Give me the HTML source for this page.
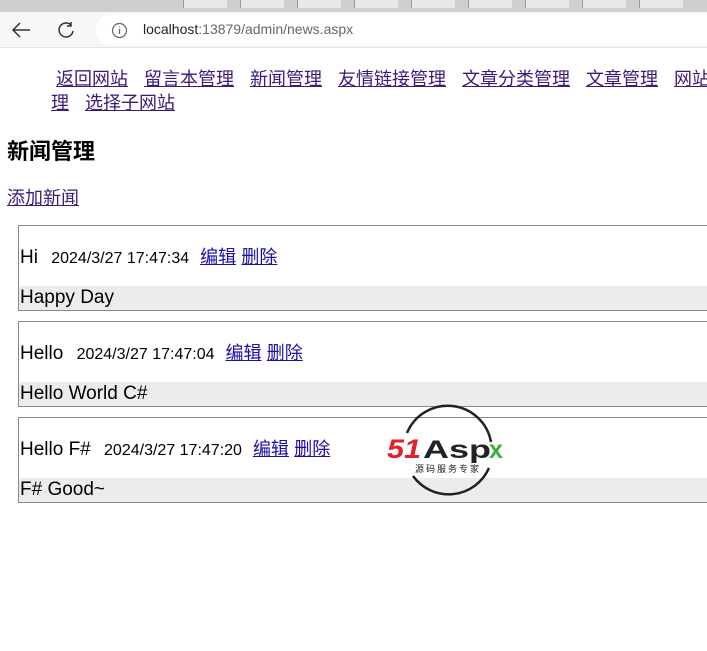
<!DOCTYPE html>
<html><head><meta charset="utf-8"><style>
*{margin:0;padding:0;box-sizing:border-box}
body{width:707px;height:651px;overflow:hidden;background:#fff;font-family:"Liberation Sans","Noto Sans CJK SC",sans-serif;position:relative}
.tabs{position:absolute;left:0;top:0;width:707px;height:12px;background:#cfcfcf}
.tab{position:absolute;top:0;height:8px;width:44px;background:#e8e8e8;border-left:1px solid #999}
.bar{position:absolute;left:0;top:12px;width:707px;height:36px;background:#f7f7f7;border-bottom:1px solid #e5e5e5}
.url{position:absolute;left:96px;top:3px;width:640px;height:30px;background:#fff;border-radius:15px}
.url span{position:absolute;left:47px;top:6px;font-size:14px;color:#222}
.url span i{font-style:normal;color:#666}
a{color:#1a0dab}
.nav{position:absolute;left:51px;top:67px;width:680px;font-size:18px;line-height:24px;white-space:nowrap}
.nav a{color:#3c1a7a;margin-right:16px}
h2{position:absolute;left:7px;top:137px;font-size:22px;font-weight:bold;font-family:"Noto Sans CJK SC",sans-serif;line-height:26px}
.add{position:absolute;left:7px;top:184px;font-size:18px;color:#3c1a7a}
.box{position:absolute;left:18px;width:760px;height:86px;border:1px solid #888}
.t{position:absolute;left:1px;top:18px;font-size:19px;line-height:26px;white-space:nowrap}
.t small{font-size:16px;margin:0 11px 0 8px}
.t a{font-size:18px;color:#1a0dab}
.c{position:absolute;left:0;right:0;bottom:0;height:24px;background:#ececec;font-size:19px;line-height:24px;padding-left:1px}
</style></head><body>
<div class="tabs"><div class="tab" style="left:183px"></div><div class="tab" style="left:240px"></div><div class="tab" style="left:297px"></div><div class="tab" style="left:354px"></div><div class="tab" style="left:411px"></div><div class="tab" style="left:468px"></div><div class="tab" style="left:525px"></div><div class="tab" style="left:582px"></div><div class="tab" style="left:639px"></div></div>
<div class="bar">
<svg style="position:absolute;left:10px;top:9px" width="22" height="18"><path d="M20 9H3M10 2L3 9l7 7" fill="none" stroke="#333" stroke-width="1.5"/></svg>
<svg style="position:absolute;left:56px;top:8px" width="20" height="20"><path d="M15 5A7 7 0 1 0 17 11M15 2v4h-4" fill="none" stroke="#333" stroke-width="1.5"/></svg>
<div class="url"><svg style="position:absolute;left:15px;top:7px" width="17" height="17"><circle cx="8.5" cy="8.5" r="7" fill="none" stroke="#666" stroke-width="1.2"/><path d="M8.5 7v5M8.5 4.5v1" stroke="#666" stroke-width="1.3"/></svg><span>localhost<i>:13879/admin/news.aspx</i></span></div>
</div>
<div class="nav">&nbsp;<a href="#">返回网站</a><a href="#">留言本管理</a><a href="#">新闻管理</a><a href="#">友情链接管理</a><a href="#">文章分类管理</a><a href="#">文章管理</a><a href="#">网站管</a><br><a href="#">理</a><a href="#">选择子网站</a></div>
<h2>新闻管理</h2>
<a class="add" href="#">添加新闻</a>
<div class="box" style="top:225px"><div class="t">Hi <small>2024/3/27 17:47:34</small><a href="#">编辑</a> <a href="#">删除</a></div><div class="c">Happy Day</div></div>
<div class="box" style="top:321px"><div class="t">Hello <small>2024/3/27 17:47:04</small><a href="#">编辑</a> <a href="#">删除</a></div><div class="c">Hello World C#</div></div>
<div class="box" style="top:417px"><div class="t">Hello F# <small>2024/3/27 17:47:20</small><a href="#">编辑</a> <a href="#">删除</a></div><div class="c">F# Good~</div></div>
<svg style="position:absolute;left:385px;top:400px" width="130" height="100">
<path d="M22 33A44 44 0 0 1 106 42" fill="none" stroke="#222" stroke-width="2.5"/>
<path d="M104 68A44 44 0 0 1 28 76" fill="none" stroke="#222" stroke-width="2.5"/>
<text x="2" y="58" font-family="Liberation Sans" font-weight="bold" font-style="italic" font-size="27" fill="#e0202a" textLength="34" lengthAdjust="spacingAndGlyphs">51</text>
<text x="38" y="58" font-family="Liberation Sans" font-weight="bold" font-size="25" fill="#222" textLength="68" lengthAdjust="spacingAndGlyphs">Asp</text>
<text x="104" y="58" font-family="Liberation Sans" font-weight="bold" font-size="25" fill="#3cae3c">x</text>
<text x="30" y="72" font-family="Noto Sans CJK SC" font-size="9" fill="#222" letter-spacing="2">源码服务专家</text>
</svg>
</body></html>
